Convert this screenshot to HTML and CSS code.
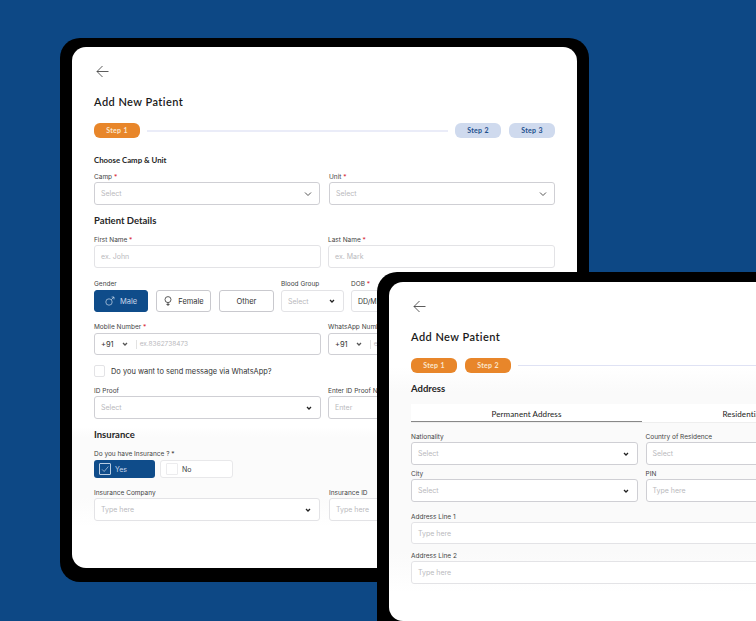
FILE: index.html
```html
<!DOCTYPE html>
<html lang="en">
<head>
<meta charset="UTF-8">
<meta name="viewport" content="width=device-width, initial-scale=1.0">
<title>Add New Patient</title>
<link rel="stylesheet" href="styles.css">
</head>
<body>
<svg class="sprite" aria-hidden="true">
    <symbol id="arrow" viewBox="0 0 13 13"><path d="M12.5 6.5H1M6.5 1 1 6.5 6.5 12" fill="none" stroke="currentColor" stroke-width=".8"/></symbol>
    <symbol id="chev" viewBox="0 0 8 8"><path d="M1 2.5 4 5.5 7 2.5" fill="none" stroke="currentColor" stroke-width="1"/></symbol>
    <symbol id="chev-bold" viewBox="0 0 8 8"><path d="M2 3 4 5 6 3" fill="none" stroke="currentColor" stroke-width="1.3"/></symbol>
</svg>

<!-- back tablet -->
<div class="tablet tablet-back">
    <div class="screen">
        <svg class="back"><use href="#arrow"/></svg>
        <h1 class="title">Add New Patient</h1>
        <div class="steps">
            <span class="pill pill-on">Step 1</span>
            <span class="step-line"></span>
            <span class="pill pill-off">Step 2</span>
            <span class="pill pill-off">Step 3</span>
        </div>

        <h3 class="sub-head">Choose Camp &amp; Unit</h3>
        <div class="row row-camp">
            <div class="field">
                <label class="lbl">Camp <em>*</em></label>
                <div class="ctl"><span class="ph">Select</span><svg class="chev"><use href="#chev"/></svg></div>
            </div>
            <div class="field">
                <label class="lbl">Unit <em>*</em></label>
                <div class="ctl"><span class="ph">Select</span><svg class="chev"><use href="#chev"/></svg></div>
            </div>
        </div>

        <h2 class="head head-patient">Patient Details</h2>
        <div class="row row-tight row-name">
            <div class="field">
                <label class="lbl">First Name <em>*</em></label>
                <div class="ctl ctl-light"><span class="ph">ex. John</span></div>
            </div>
            <div class="field">
                <label class="lbl">Last Name <em>*</em></label>
                <div class="ctl ctl-light"><span class="ph">ex. Mark</span></div>
            </div>
        </div>

        <div class="gender-row">
            <div class="gender">
                <label class="lbl lbl-far">Gender</label>
                <div class="gender-btns">
                    <button class="gbtn gbtn-on">
                        <svg class="gicon" viewBox="0 0 10 10"><circle cx="4" cy="6" r="3.2" fill="none" stroke="currentColor" stroke-width=".7"/><path d="M6.3 3.7 9 1M6.6 1H9v2.4" fill="none" stroke="currentColor" stroke-width=".7"/></svg>
                        Male
                    </button>
                    <button class="gbtn">
                        <svg class="gicon" viewBox="0 0 10 10"><circle cx="5" cy="3.6" r="3" fill="none" stroke="currentColor" stroke-width=".8"/><path d="M5 6.6V10M3.4 8.4h3.2" fill="none" stroke="currentColor" stroke-width=".8"/></svg>
                        Female
                    </button>
                    <button class="gbtn">Other</button>
                </div>
            </div>
            <div class="blood">
                <label class="lbl lbl-far">Blood Group</label>
                <div class="ctl ctl-short ctl-light"><span class="ph">Select</span><svg class="chev chev-dark"><use href="#chev-bold"/></svg></div>
            </div>
            <div class="dob">
                <label class="lbl lbl-far">DOB <em>*</em></label>
                <div class="ctl ctl-short ctl-light"><span class="val">DD/MM/YYYY</span></div>
            </div>
        </div>

        <div class="row row-tight row-mobile">
            <div class="field">
                <label class="lbl lbl-far">Mobile Number <em>*</em></label>
                <div class="ctl ctl-short">
                    <span class="val code">+91</span><svg class="chev chev-code"><use href="#chev-bold"/></svg>
                    <span class="divider"></span><span class="ph ph-small">ex.8362738473</span>
                </div>
            </div>
            <div class="field">
                <label class="lbl lbl-far">WhatsApp Number</label>
                <div class="ctl ctl-short">
                    <span class="val code">+91</span><svg class="chev chev-code"><use href="#chev-bold"/></svg>
                    <span class="divider"></span><span class="ph ph-small">ex.8362738473</span>
                </div>
            </div>
        </div>

        <div class="check-row">
            <span class="checkbox"></span>
            <span class="check-text">Do you want to send message via WhatsApp?</span>
        </div>

        <div class="row row-tight row-id">
            <div class="field">
                <label class="lbl">ID Proof</label>
                <div class="ctl"><span class="ph">Select</span><svg class="chev chev-dark"><use href="#chev-bold"/></svg></div>
            </div>
            <div class="field">
                <label class="lbl">Enter ID Proof Number</label>
                <div class="ctl"><span class="ph">Enter</span></div>
            </div>
        </div>

        <h2 class="head head-ins">Insurance</h2>
        <label class="lbl lbl-far lbl-ins">Do you have Insurance ? *</label>
        <div class="choice-row">
            <div class="choice choice-yes">
                <span class="tick"><svg viewBox="0 0 12 12"><path d="M2.5 6.5 5 9 10 3" fill="none" stroke="currentColor" stroke-width=".8"/></svg></span>Yes
            </div>
            <div class="choice choice-no"><span class="tick"></span>No</div>
        </div>

        <div class="row row-company">
            <div class="field">
                <label class="lbl">Insurance Company</label>
                <div class="ctl ctl-light"><span class="ph">Type here</span><svg class="chev chev-dark"><use href="#chev-bold"/></svg></div>
            </div>
            <div class="field">
                <label class="lbl">Insurance ID</label>
                <div class="ctl ctl-light"><span class="ph">Type here</span></div>
            </div>
        </div>
    </div>
</div>

<!-- front tablet, runs off the page -->
<div class="tablet tablet-front">
    <div class="screen">
        <svg class="back"><use href="#arrow"/></svg>
        <h1 class="title">Add New Patient</h1>
        <div class="steps">
            <span class="pill pill-on">Step 1</span>
            <span class="pill pill-on">Step 2</span>
            <span class="step-line"></span>
        </div>

        <h2 class="head head-address">Address</h2>
        <div class="tabs">
            <div class="tab tab-on">Permanent Address</div>
            <div class="tab">Residential Address</div>
        </div>

        <div class="row row-front row-nation">
            <div class="field">
                <label class="lbl">Nationality</label>
                <div class="ctl"><span class="ph">Select</span><svg class="chev chev-dark"><use href="#chev-bold"/></svg></div>
            </div>
            <div class="field">
                <label class="lbl">Country of Residence</label>
                <div class="ctl"><span class="ph">Select</span><svg class="chev chev-dark"><use href="#chev-bold"/></svg></div>
            </div>
        </div>
        <div class="row row-front row-city">
            <div class="field">
                <label class="lbl">City</label>
                <div class="ctl"><span class="ph">Select</span><svg class="chev chev-dark"><use href="#chev-bold"/></svg></div>
            </div>
            <div class="field">
                <label class="lbl">PIN</label>
                <div class="ctl"><span class="ph">Type here</span></div>
            </div>
        </div>
        <div class="field line-one">
            <label class="lbl">Address Line 1</label>
            <div class="ctl ctl-light ctl-short"><span class="ph">Type here</span></div>
        </div>
        <div class="field line-two">
            <label class="lbl">Address Line 2</label>
            <div class="ctl ctl-light"><span class="ph">Type here</span></div>
        </div>
    </div>
</div>
</body>
</html>
```

FILE: styles.css
```css
* {
    box-sizing: border-box;
}
html, body {
    height: 100%;
}
body {
    margin: 0;
    background: #0d4885;
    overflow: hidden;
    position: relative;
    font-family: 'Inter', sans-serif;
    color: #222;
}
.sprite {
    display: none;
}

/* tablets sit on a free canvas */
.tablet {
    position: absolute;
    background: #000;
}
.tablet-back {
    left: 60px;
    top: 38px;
    width: 529px;
    height: 544px;
    padding: 9px 12px 14px;
    border-radius: 20px;
}
.tablet-front {
    left: 377px;
    top: 272px;
    width: 379px;
    height: 349px;
    padding: 10px 0 0 12px;
    border-radius: 20px 0 0 0;
}
.screen {
    background: #fff;
    height: 100%;
    padding: 18px 22px 0;
    border-radius: 14px;
    overflow: hidden;
}
.tablet-back .screen {
    background: linear-gradient(#fff 0, #fff 380px, #fbfbfb 390px, #fbfbfb 450px, #fff 480px);
}
.tablet-front .screen {
    width: 505px;
    background: linear-gradient(#fff 0, #fff 85px, #fafafa 110px, #fafafa 270px, #fff 310px);
}

.back {
    display: block;
    width: 13px;
    height: 13px;
    margin-left: 2px;
    color: #333;
}
.title {
    margin: 17px 0 0;
    height: 14px;
    font: 600 11px/14px 'Lato', sans-serif;
    letter-spacing: .45px;
    color: #1a1a1a;
}
.steps {
    display: flex;
    align-items: center;
    gap: 8px;
    margin-top: 14px;
}
.pill {
    flex: none;
    width: 46px;
    height: 15px;
    border-radius: 6px;
    font: 700 7px/15px 'Lato', sans-serif;
    letter-spacing: .3px;
    text-align: center;
}
.pill-on {
    background: #e8862a;
    color: #fbe6cf;
}
.pill-off {
    background: #cfdaee;
    color: #1c4f8c;
}
.step-line {
    flex: 1;
    height: 2px;
    margin: 0 -1px;
    background: #eaecf8;
}
.tablet-front .step-line {
    height: 1px;
    background: #dfe2f4;
}

.sub-head, .head {
    margin: 0;
    font-family: 'Lato', sans-serif;
    font-weight: 700;
    color: #262626;
}
.sub-head {
    margin-top: 17px;
    height: 10px;
    font-size: 7.8px;
    line-height: 11px;
}
.head {
    height: 10px;
    font-size: 9.5px;
    line-height: 11px;
}
.head-patient { margin-top: 10px; }
.head-ins { margin-top: 10px; }
.head-address {
    height: 11px;
    margin-top: 10px;
}

.row {
    display: grid;
    grid-template-columns: 1fr 1fr;
    gap: 9px;
}
.row-tight {
    gap: 7px;
}
.row-camp { margin-top: 7px; }
.row-name { margin-top: 10px; }
.row-mobile { margin-top: 10px; }
.row-id { margin-top: 9px; }
.row-company { margin-top: 10px; }
.row-front { gap: 8px; }
.row-nation { margin-top: 9px; }
.row-city { margin-top: 4px; }
.line-one { margin-top: 10px; }
.line-two { margin-top: 7px; }

.lbl {
    display: block;
    height: 9px;
    margin-bottom: 1px;
    font-size: 6.5px;
    line-height: 11px;
    color: #444;
    white-space: nowrap;
}
.lbl em {
    font-style: normal;
    color: #d9293a;
}
.lbl-far {
    margin-bottom: 2px;
}
.lbl-ins {
    margin-top: 10px;
}
.ctl {
    position: relative;
    display: flex;
    align-items: center;
    height: 23px;
    padding: 0 6px;
    background: #fff;
    border: 1px solid #cfcfd4;
    border-radius: 3px;
    font-size: 7px;
    white-space: nowrap;
    overflow: hidden;
}
.ctl-light {
    border-color: #e3e3e6;
}
.ctl-short {
    height: 22px;
}
.ph {
    color: #b9b9bd;
}
.ph-small {
    font-size: 6.5px;
}
.val {
    color: #333;
}
.chev {
    width: 8px;
    height: 8px;
    margin-left: auto;
    margin-right: 1px;
    color: #555;
}
.chev-dark {
    color: #222;
}
.code {
    font-size: 7.5px;
}
.chev-code {
    margin: 0 0 0 7px;
}
.divider {
    width: 1px;
    height: 9px;
    margin: 0 3px 0 7px;
    background: #e2e2e2;
}

.gender-row {
    display: flex;
    gap: 7px;
    margin-top: 11px;
}
.gender-btns {
    display: flex;
    gap: 8px;
}
.gbtn {
    display: flex;
    align-items: center;
    justify-content: center;
    gap: 5px;
    width: 55px;
    height: 22px;
    padding: 0;
    background: #fff;
    border: 1px solid #c9c9ce;
    border-radius: 3px;
    font: 400 7.5px 'Inter', sans-serif;
    color: #333;
}
.gbtn-on {
    width: 54px;
    background: #0f4c8a;
    border-color: #0f4c8a;
    color: #c9d8ea;
}
.gicon {
    width: 10px;
    height: 10px;
}
.blood {
    width: 63px;
}
.dob {
    width: 204px;
}

.check-row {
    display: flex;
    align-items: center;
    gap: 6px;
    height: 12px;
    margin-top: 10px;
}
.checkbox {
    width: 11px;
    height: 12px;
    border: 1px solid #e3e3e6;
    border-radius: 2px;
}
.check-text {
    font-size: 7.45px;
    color: #333;
}

.choice-row {
    display: flex;
    gap: 5px;
}
.choice {
    display: flex;
    align-items: center;
    gap: 4px;
    height: 18px;
    padding-left: 5px;
    border-radius: 3px;
    font-size: 7px;
}
.choice-yes {
    width: 61px;
    background: #0f4c8a;
    color: #c9d8ea;
}
.choice-no {
    width: 73px;
    background: #fff;
    border: 1px solid #e8e8ea;
    color: #444;
}
.tick {
    display: flex;
    width: 12px;
    height: 12px;
    border: 1px solid #ececee;
    border-radius: 1px;
}
.choice-yes .tick {
    border-color: #b9cde3;
}

.tabs {
    display: flex;
    width: 462px;
    margin-top: 10px;
    border-bottom: 1px solid #eee;
}
.tab {
    width: 231px;
    height: 18px;
    padding-top: 5px;
    font: 400 8px/11px 'Lato', sans-serif;
    letter-spacing: .1px;
    text-align: center;
    color: #222;
    background: #fff;
}
.tab-on {
    border-bottom: 1px solid #888;
    margin-bottom: -1px;
}
```
